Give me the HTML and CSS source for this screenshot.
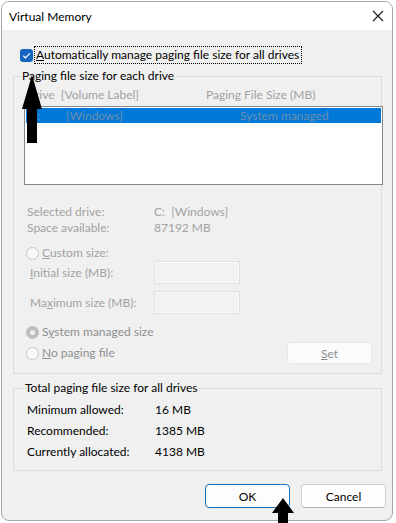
FILE: index.html
```html
<!DOCTYPE html>
<html>
<head>
<meta charset="utf-8">
<link rel="stylesheet" href="styles.css">
</head>
<body>
<div class="window">
  <div class="titlebar">
    <span class="title">Virtual Memory</span>
    <svg class="close" width="12" height="12" viewBox="0 0 12 12"><path d="M1 1 L11 11 M11 1 L1 11" stroke="#1a1a1a" stroke-width="1.1" fill="none"/></svg>
  </div>
  <div class="content">
    <div class="check-row">
      <span class="checkbox"><svg width="13" height="13" viewBox="0 0 13 13"><path d="M3.3 6.7 L5.5 8.8 L9.8 4.4" stroke="#fff" stroke-width="1.2" fill="none"/></svg></span>
      <span class="focus"><u>A</u>utomatically manage paging file size for all drives</span>
    </div>

    <fieldset class="group group-drive">
      <legend>Paging file size for each drive</legend>
      <div class="list-head dis"><span class="c1">Drive&nbsp; [Volume Label]</span><span class="c2">Paging File Size (MB)</span></div>
      <div class="listbox">
        <div class="list-row sel"><span class="c1">C:</span><span class="c1b">[Windows]</span><span class="c2">System managed</span></div>
      </div>
      <div class="info dis">
        <div class="kv"><span class="k">Selected drive:</span><span>C:&nbsp; [Windows]</span></div>
        <div class="kv"><span class="k">Space available:</span><span>87192 MB</span></div>
      </div>
      <div class="radio-row custom dis"><span class="radio"></span><span><u>C</u>ustom size:</span></div>
      <div class="field-row first dis"><span class="flabel"><u>I</u>nitial size (MB):</span><span class="input"></span></div>
      <div class="field-row dis"><span class="flabel">Ma<u>x</u>imum size (MB):</span><span class="input"></span></div>
      <div class="radio-row sysm dis2"><span class="radio on"></span><span>S<u>y</u>stem managed size</span></div>
      <div class="last-row">
        <div class="radio-row dis2"><span class="radio"></span><span><u>N</u>o paging file</span></div>
        <span class="btn set"><u>S</u>et</span>
      </div>
    </fieldset>

    <fieldset class="group group-total">
      <legend>Total paging file size for all drives</legend>
      <div class="tkv first"><span class="k">Minimum allowed:</span><span>16 MB</span></div>
      <div class="tkv"><span class="k">Recommended:</span><span>1385 MB</span></div>
      <div class="tkv"><span class="k">Currently allocated:</span><span>4138 MB</span></div>
    </fieldset>

    <div class="buttons">
      <span class="btn ok">OK</span>
      <span class="btn cancel">Cancel</span>
    </div>
  </div>
</div>
<svg class="arrow arrow-top" width="22" height="70" viewBox="0 0 22 70"><polygon points="10,0 20,34 15,34 15,68 5,68 5,34 0,34" fill="#000"/></svg>
<svg class="arrow arrow-bottom" width="24" height="26" viewBox="0 0 24 26"><polygon points="11,0 22,15 16,15 16,26 6,26 6,15 0,15" fill="#000"/></svg>
</body>
</html>
```
FILE: styles.css
```css
html, body {
  margin: 0;
  padding: 0;
  background: #ffffff;
}
body {
  font-family: Lato, "Noto Sans", sans-serif;
  font-size: 12px;
  color: #000;
  width: 396px;
  height: 523px;
  overflow: hidden;
  position: relative;
}
.window {
  margin: 1px 0 0 1px;
  width: 390px;
  height: 518px;
  border: 1px solid #a6a6a6;
  border-radius: 8px;
  background: #f0f0f0;
  overflow: hidden;
}
.titlebar {
  height: 28px;
  background: #ffffff;
  display: flex;
  align-items: center;
  justify-content: space-between;
  padding: 0 8px 0 7px;
}
.title {
  font-size: 12px;
  margin-top: 1px;
}
.content {
  padding: 0 0 0 11px;
}
.check-row {
  display: flex;
  align-items: center;
  height: 16px;
  margin: 17px 0 0 7px;
}
.checkbox {
  width: 13px;
  height: 13px;
  border-radius: 3px;
  background: #1565c0;
  display: inline-flex;
  margin-right: 2px;
}
.focus {
  outline: 1px dotted #000;
  outline-offset: 0;
  line-height: 16px;
  padding: 0 2px 0 1px;
}
.group {
  margin: 5px 0 0 0;
  border: 1px solid #dcdcdc;
  padding: 0 0 0 10px;
  box-sizing: border-box;
  width: 369px;
}
.group legend {
  padding: 0 2px 0 0;
  margin-left: -2px;
  line-height: 16px;
}
.dis { color: #a2a2a2; }
.dis2 { color: #8e8e8e; }
.list-head {
  display: flex;
  line-height: 16px;
  margin-top: 3px;
  padding-left: 2px;
}
.c1 { width: 180px; }
.listbox {
  margin-top: 3px;
  height: 75px;
  width: 355px;
  border: 1px solid #828790;
  background: #fff;
  padding: 1px;
  margin-right: -2px;
}
.list-row {
  display: flex;
  height: 15px;
  line-height: 15px;
  color: #6f8fb0;
}
.list-row.sel {
  background: #0078d7;
}
.list-row .c1 { width: 37px; padding-left: 3px; }
.list-row .c1b { width: 174px; }
.info {
  margin-top: 19px;
  padding-left: 3px;
}
.kv {
  display: flex;
  line-height: 16px;
}
.kv .k { width: 127px; }
.radio-row {
  display: flex;
  align-items: center;
  line-height: 16px;
  padding-left: 2px;
}
.radio {
  width: 11px;
  height: 11px;
  border: 1px solid #c4c4c4;
  border-radius: 50%;
  background: #f8f8f8;
  margin-right: 3px;
  box-sizing: content-box;
}
.radio.on {
  background: #bdbdbd;
  border-color: #bdbdbd;
  position: relative;
}
.radio.on::after {
  content: "";
  position: absolute;
  left: 3px;
  top: 3px;
  width: 5px;
  height: 5px;
  border-radius: 50%;
  background: #f0f0f0;
}
.custom { margin-top: 9px; }
.field-row {
  display: flex;
  align-items: center;
  height: 23px;
  margin-top: 7px;
  padding-left: 6px;
}
.field-row.first { margin-top: 0; }
.flabel { width: 124px; }
.input {
  width: 84px;
  height: 21px;
  border: 1px solid #e0e0e0;
  background: #f2f2f2;
  box-shadow: inset 0 0 0 1px #fafafa;
}
.sysm { margin-top: 10px; }
.last-row {
  display: flex;
  align-items: center;
  justify-content: space-between;
  height: 22px;
  margin-top: 2px;
  padding-right: 9px;
  padding-bottom: 9px;
}
.btn {
  display: inline-flex;
  align-items: center;
  justify-content: center;
  box-sizing: border-box;
  border-radius: 4px;
}
.set {
  width: 85px;
  height: 22px;
  background: #fbfbfb;
  border: 1px solid #e8e8e8;
  color: #8e8e8e;
}
.group-total {
  margin-top: 6px;
  padding: 0 0 8px 13px;
}
.tkv {
  display: flex;
  height: 21px;
  line-height: 21px;
}
.tkv.first { margin-top: 3px; }
.tkv .k { width: 128px; }
.buttons {
  display: flex;
  justify-content: flex-end;
  gap: 11px;
  margin-top: 13px;
  padding-right: 6px;
}
.ok, .cancel {
  width: 85px;
  height: 24px;
  background: #fdfdfd;
}
.ok {
  border: 1px solid #1a6fbf;
}
.cancel {
  border: 1px solid #d0d0d0;
  border-bottom-color: #b5b5b5;
}
.arrow {
  position: absolute;
}
.arrow-top {
  left: 22px;
  top: 75px;
}
.arrow-bottom {
  left: 272px;
  top: 498px;
}
```
